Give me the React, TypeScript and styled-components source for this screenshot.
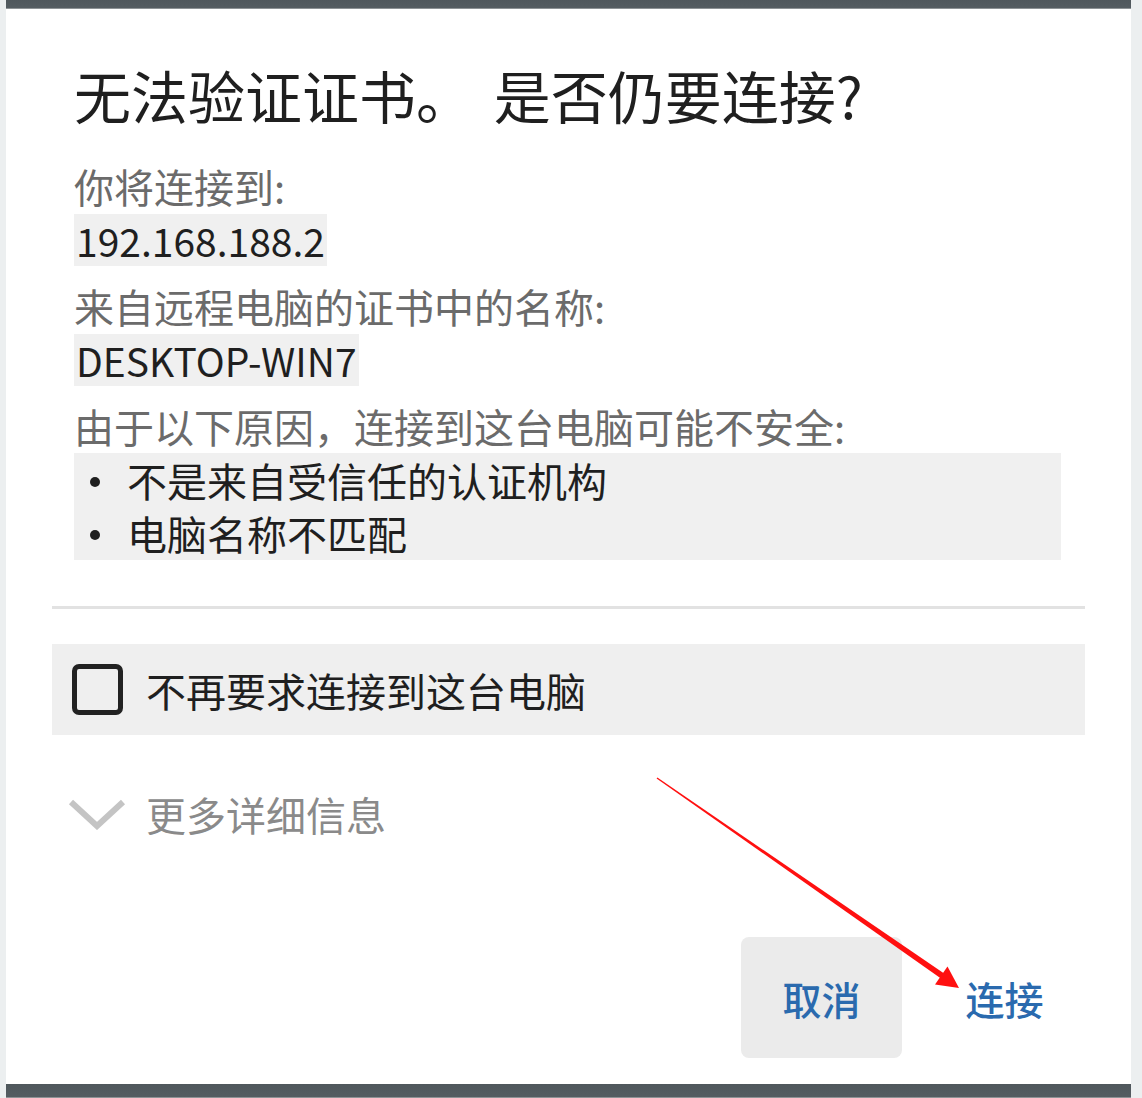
import styled, { createGlobalStyle } from "styled-components";

const GlobalStyle = createGlobalStyle`
  html, body {
    margin: 0;
    padding: 0;
    background: #eceff0;
  }
  body {
    font-family: "Noto Sans CJK SC", "Noto Sans", sans-serif;
  }
`;

const reasons = ["不是来自受信任的认证机构", "电脑名称不匹配"];

const App = () => {
  return (
    <>
      <GlobalStyle />
      <Page>
        <Frame>
          <Bar $h={8} />
          <Dialog>
            <Content>
              <Title>无法验证证书。 是否仍要连接?</Title>
              <Label $first>你将连接到:</Label>
              <Value>192.168.188.2</Value>
              <Label>来自远程电脑的证书中的名称:</Label>
              <Value>DESKTOP-WIN7</Value>
              <Label>由于以下原因，连接到这台电脑可能不安全:</Label>
              <ReasonList>
                {reasons.map((r) => (
                  <Reason key={r}>{r}</Reason>
                ))}
              </ReasonList>
            </Content>
            <Divider />
            <CheckRow>
              <CheckBox />
              <CheckText>不再要求连接到这台电脑</CheckText>
            </CheckRow>
            <MoreRow>
              <svg width="58" height="32" viewBox="0 0 58 32">
                <polyline
                  points="3,4 29,28 55,4"
                  fill="none"
                  stroke="#c4c4c4"
                  strokeWidth="6"
                />
              </svg>
              <MoreText>更多详细信息</MoreText>
            </MoreRow>
            <Actions>
              <ActionButton $filled>取消</ActionButton>
              <ActionButton>连接</ActionButton>
            </Actions>
          </Dialog>
          <Bar $h={13} />
        </Frame>
        <Arrow width="1142" height="1098" viewBox="0 0 1142 1098">
          <polygon
            points="656.6,778.5 942.4,979.4 945.6,974.6 657.4,777.5"
            fill="#ff1010"
          />
          <polygon points="959,988 935,984.5 947.5,966.5" fill="#ff1010" />
        </Arrow>
      </Page>
    </>
  );
};

const Page = styled.div`
  position: relative;
  width: 1142px;
  height: 1098px;
  overflow: hidden;
  background: #eceff0;
`;

const Frame = styled.div`
  margin-left: 6px;
  width: 1125px;
  height: 1098px;
  display: flex;
  flex-direction: column;
`;

const Bar = styled.div<{ $h: number }>`
  flex: 0 0 ${(p) => p.$h}px;
  background: linear-gradient(#4f575c, #545c61);
  border-bottom: 1px solid #8d9295;
`;

const Dialog = styled.div`
  flex: 1;
  background: #ffffff;
  display: flex;
  flex-direction: column;
  padding: 0 46px;
`;

const Content = styled.div`
  padding: 49px 24px 0 22px;
  display: flex;
  flex-direction: column;
  align-items: flex-start;
`;

const Title = styled.h1`
  margin: 0 0 30px 0;
  font-size: 57px;
  line-height: 72px;
  font-weight: 400;
  word-spacing: 8px;
  color: #1f1f1f;
`;

const Label = styled.div<{ $first?: boolean }>`
  margin-top: ${(p) => (p.$first ? 0 : 14)}px;
  font-size: 40px;
  line-height: 52px;
  color: #6b6b6b;
`;

const Value = styled.div`
  margin-top: 2px;
  padding: 0 2px;
  background: #f0f0f0;
  font-size: 39px;
  line-height: 52px;
  color: #1f1f1f;
`;

const ReasonList = styled.ul`
  align-self: stretch;
  margin: 1px 0 0 0;
  padding: 0;
  list-style: none;
  background: #f0f0f0;
`;

const Reason = styled.li`
  display: flex;
  align-items: center;
  height: 53.5px;
  font-size: 40px;
  color: #1f1f1f;
  &::before {
    content: "";
    width: 10px;
    height: 10px;
    border-radius: 50%;
    background: #1f1f1f;
    margin: 4px 27px 0 16px;
  }
`;

const Divider = styled.div`
  margin-top: 46px;
  height: 3px;
  background: #e2e2e2;
`;

const CheckRow = styled.label`
  margin-top: 35px;
  height: 91px;
  display: flex;
  align-items: center;
  gap: 23px;
  padding-left: 20px;
  background: #efefef;
`;

const CheckBox = styled.span`
  box-sizing: border-box;
  width: 51px;
  height: 51px;
  border: 5px solid #222;
  border-radius: 7px;
`;

const CheckText = styled.span`
  font-size: 40px;
  color: #1f1f1f;
`;

const MoreRow = styled.div`
  margin-top: 44px;
  height: 70px;
  display: flex;
  align-items: center;
  gap: 20px;
  padding-left: 16px;
`;

const MoreText = styled.span`
  font-size: 40px;
  color: #8a8a8a;
`;

const Actions = styled.div`
  margin-top: 88px;
  display: flex;
  justify-content: flex-end;
  gap: 22px;
`;

const ActionButton = styled.button<{ $filled?: boolean }>`
  width: 161px;
  height: 121px;
  border: none;
  border-radius: 8px;
  background: ${(p) => (p.$filled ? "#ebebeb" : "transparent")};
  font-family: "Noto Sans CJK SC", sans-serif;
  font-size: 39px;
  font-weight: 500;
  color: #2a6aae;
`;

const Arrow = styled.svg`
  position: absolute;
  left: 0;
  top: 0;
  pointer-events: none;
`;

export default App;
